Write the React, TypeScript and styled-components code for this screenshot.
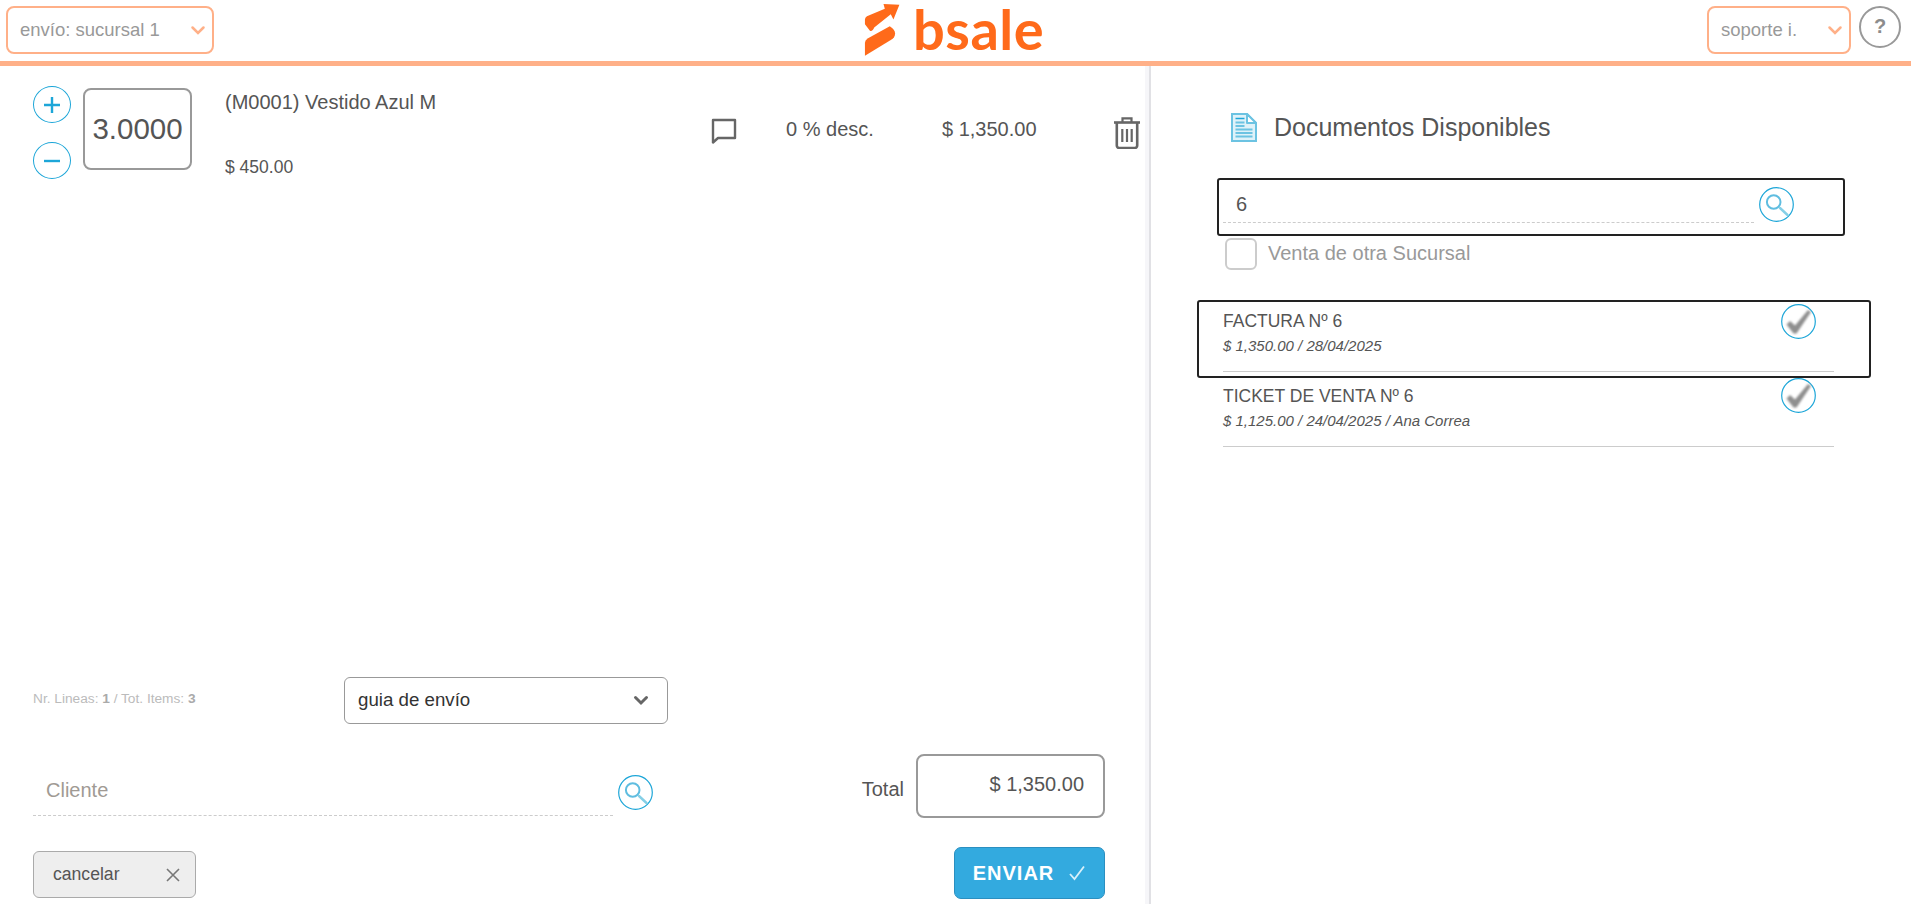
import { createGlobalStyle } from "styled-components";
import styled from "styled-components";

const GlobalStyle = createGlobalStyle`
  html, body {
    margin: 0;
    padding: 0;
    background: #fff;
    overflow: hidden;
  }
  * { box-sizing: border-box; }
  body {
    font-family: "Liberation Sans", Arial, sans-serif;
    color: #555;
  }
`;

const Page = styled.div`
  width: 1911px;
  height: 904px;
  display: flex;
  flex-direction: column;
`;

const Header = styled.header`
  height: 66px;
  flex: none;
  border-bottom: 5px solid #ffb088;
  display: grid;
  grid-template-columns: 1fr auto 1fr;
  padding: 6px 10px 0 6px;
  align-items: start;
`;

const HeaderRight = styled.div`
  display: flex;
  justify-content: flex-end;
  gap: 8px;
`;

const OrangeSelect = styled.div<{ $width: number }>`
  width: ${({ $width }) => $width}px;
  height: 48px;
  border: 2px solid #ffb088;
  border-radius: 8px;
  display: flex;
  align-items: center;
  justify-content: space-between;
  padding: 0 6px 0 12px;
  font-size: 18.5px;
  color: #999;
`;

const HelpButton = styled.div`
  width: 42px;
  height: 42px;
  border: 2px solid #999;
  border-radius: 50%;
  display: flex;
  align-items: center;
  justify-content: center;
  font-size: 20px;
  font-weight: 700;
  color: #8c8c8c;
  padding-bottom: 2px;
`;

const Logo = styled.div`
  display: flex;
  align-items: flex-start;
  gap: 12px;
  margin: -3px 0 0 0;
  padding-left: 2px;
`;

const LogoWord = styled.text`
  font-family: Lato, sans-serif;
  font-weight: 700;
  font-size: 56px;
  letter-spacing: 0.5px;
  fill: #ff6a1a;
`;

const LogoWordArt = styled.svg`
  margin-top: 5px;
`;

const Body = styled.main`
  flex: 1;
  display: flex;
  min-height: 0;
`;

const LeftPanel = styled.section`
  width: 1149px;
  flex: none;
  border-right: 4px solid #f6f6f9;
  display: flex;
  flex-direction: column;
  padding: 20px 0 5px 33px;
`;

const LineRow = styled.div`
  display: flex;
  align-items: flex-start;
`;

const Stepper = styled.div`
  flex: none;
  display: flex;
  flex-direction: column;
  gap: 19px;
  width: 38px;
  margin-right: 12px;
`;

const RoundButton = styled.div`
  width: 38px;
  height: 37px;
  border: 1.5px solid #1da6d8;
  border-radius: 50%;
  display: flex;
  align-items: center;
  justify-content: center;
  color: #1da6d8;
`;

const QtyBox = styled.div`
  flex: none;
  width: 109px;
  height: 82px;
  margin-top: 2px;
  border: 2px solid #999;
  border-radius: 8px;
  display: flex;
  align-items: center;
  justify-content: center;
  font-size: 29.5px;
  color: #555;
  margin-right: 33px;
`;

const LineInfo = styled.div`
  flex: none;
  width: 486px;
  display: flex;
  flex-direction: column;
`;

const LineName = styled.div`
  font-size: 20px;
  line-height: 24px;
  color: #555;
  margin-top: 4px;
`;

const LinePrice = styled.div`
  font-size: 17.5px;
  line-height: 20px;
  color: #555;
  margin-top: 43px;
`;

const CommentSlot = styled.div`
  flex: none;
  width: 75px;
  padding-top: 32px;
  display: flex;
`;

const LineText = styled.div<{ $width: number }>`
  flex: none;
  width: ${({ $width }) => $width}px;
  font-size: 20px;
  line-height: 24px;
  padding-top: 31px;
  color: #555;
`;

const TrashSlot = styled.div`
  flex: none;
  padding-top: 31px;
  display: flex;
`;

const Footer = styled.div`
  margin-top: auto;
  width: 1072px;
  display: flex;
  flex-direction: column;
`;

const FooterRow = styled.div`
  display: flex;
  align-items: center;
  justify-content: space-between;
`;

const StatsRow = styled.div`
  display: flex;
  align-items: center;
`;

const Stats = styled.div`
  width: 311px;
  font-size: 13.7px;
  color: #bbb;
  padding-bottom: 4px;

  b {
    color: #aaa;
  }
`;

const DocSelect = styled.div`
  width: 324px;
  height: 47px;
  border: 1px solid #999;
  border-radius: 6px;
  display: flex;
  align-items: center;
  justify-content: space-between;
  padding: 0 18px 1px 13px;
  font-size: 18.7px;
  color: #333;
`;

const TotalsRow = styled(FooterRow)`
  margin-top: 30px;
  height: 64px;
`;

const ClientGroup = styled.div`
  display: flex;
  align-items: flex-start;
  gap: 5px;
`;

const DashedField = styled.div<{ $width: number; $muted?: boolean }>`
  width: ${({ $width }) => $width}px;
  height: 36px;
  border-bottom: 1px dashed #ccc;
  font-size: 20px;
  line-height: 26px;
  padding: 4px 0 0 13px;
  color: ${({ $muted }) => ($muted ? "#a09a94" : "#555")};
`;

const ClientField = styled(DashedField)`
  height: 60px;
  padding-top: 21px;
`;

const SearchSlot = styled.div`
  padding-top: 19px;
  display: flex;
`;

const TotalGroup = styled.div`
  display: flex;
  align-items: center;
  gap: 12px;
`;

const TotalLabel = styled.span`
  font-size: 20px;
  color: #555;
  padding-top: 6px;
`;

const TotalBox = styled.div`
  width: 189px;
  height: 64px;
  border: 2px solid #999;
  border-radius: 8px;
  display: flex;
  align-items: center;
  justify-content: flex-end;
  padding: 0 19px 4px 0;
  font-size: 20px;
  color: #555;
`;

const ActionsRow = styled(FooterRow)`
  margin-top: 29px;
  align-items: flex-end;
`;

const CancelButton = styled.div`
  width: 163px;
  height: 47px;
  margin-bottom: 1px;
  background: #eee;
  border: 1px solid #aaa;
  border-radius: 6px;
  display: flex;
  align-items: center;
  justify-content: space-between;
  padding: 0 15px 0 19px;
  font-size: 17.6px;
  color: #555;
`;

const SendButton = styled.div`
  width: 151px;
  height: 52px;
  background: #33aadf;
  border: 1px solid #2b8fc0;
  border-radius: 7px;
  display: flex;
  align-items: center;
  justify-content: center;
  gap: 14px;
  color: #fff;
  font-size: 20px;
  font-weight: 700;
  letter-spacing: 1px;
`;

const RightPanel = styled.section`
  flex: 1;
  border-left: 2px solid #e1e1e5;
  display: flex;
  flex-direction: column;
  padding: 45px 0 0 66px;
`;

const TitleRow = styled.div`
  display: flex;
  align-items: center;
  gap: 17px;
  margin-left: 14px;
  height: 32px;
`;

const Title = styled.h2`
  margin: 0;
  font-size: 25px;
  font-weight: 400;
  color: #555;
`;

const SearchBox = styled.div`
  width: 628px;
  height: 58px;
  margin-top: 35px;
  border: 2px solid #222;
  border-radius: 3px;
  display: flex;
  align-items: flex-start;
  padding: 7px 0 0 4px;
  gap: 5px;
`;

const OtherBranch = styled.div`
  display: flex;
  align-items: center;
  gap: 11px;
  margin: 2px 0 0 8px;
  font-size: 20px;
  line-height: 30px;
  color: #999;
`;

const BranchLabel = styled.span`
  padding-bottom: 2px;
`;

const CheckBox = styled.span`
  width: 32px;
  height: 32px;
  border: 2px solid #ccc;
  border-radius: 6px;
`;

const DocList = styled.div`
  width: 611px;
  margin: 27px 0 0 6px;
`;

const DocRow = styled.div<{ $focused?: boolean }>`
  position: relative;
  height: 75px;
  border-bottom: 1px solid #ccc;
  padding-top: 14px;
  display: flex;
  justify-content: space-between;

  ${({ $focused }) =>
    $focused &&
    `&::after {
      content: "";
      position: absolute;
      left: -26px;
      right: -37px;
      top: 3px;
      bottom: -7px;
      border: 2px solid #222;
      border-radius: 3px;
    }`}
`;

const DocTitle = styled.div`
  font-size: 17.5px;
  line-height: 20px;
  color: #555;
`;

const DocMeta = styled.div<{ $gap: number }>`
  font-size: 15px;
  line-height: 16px;
  font-style: italic;
  color: #555;
  margin-top: ${({ $gap }) => $gap}px;
`;

const CheckSlot = styled.div<{ $top: number }>`
  margin: ${({ $top }) => $top}px 18px 0 0;
`;

const Chevron = ({ color, width = 2.5 }: { color: string; width?: number }) => (
  <svg width="16" height="16" viewBox="0 0 16 16" fill="none">
    <path d="M2.5 5.5 8 11l5.5-5.5" stroke={color} strokeWidth={width} strokeLinecap="round" />
  </svg>
);

const SearchIcon = () => (
  <svg width="35" height="35" viewBox="0 0 35 35" fill="none">
    <circle cx="17.5" cy="17.5" r="16.8" stroke="#1da6d8" strokeWidth="1.2" />
    <circle cx="14.7" cy="15" r="6.8" stroke="#5fbde0" strokeWidth="2" />
    <path d="m21 21 7.5 7" stroke="#85cfe6" strokeWidth="2.4" strokeLinecap="round" />
  </svg>
);

const CheckIcon = () => (
  <svg width="35" height="35" viewBox="0 0 35 35" fill="none">
    <defs>
      <filter id="soft" x="-20%" y="-20%" width="140%" height="140%">
        <feGaussianBlur stdDeviation="0.8" />
      </filter>
    </defs>
    <circle cx="17.5" cy="17.5" r="16.8" stroke="#1da6d8" strokeWidth="1.2" />
    <path d="M5.5 20.5 9 17l5 4.5L27 6l3 2-14.5 21.5h-3z" fill="#8f8f8f" filter="url(#soft)" />
  </svg>
);

const BsaleMark = () => (
  <svg width="37" height="53" viewBox="135 8 110 160">
    <path
      d="M137 58Q137 52 143 48L197 25 193 11 241 13 223 58 215 42 165 82Q160 95 152 92L137 72Z"
      fill="#ff6a1a"
    />
    <path
      d="M137 167V128Q137 120 145 115L212 78Q228 88 228 100 228 112 215 120Z"
      fill="#ff6a1a"
    />
  </svg>
);

const CommentIcon = () => (
  <svg width="26" height="26" viewBox="0 0 26 26" fill="none">
    <path d="M2 2h22v18H7l-5 4.5z" stroke="#666" strokeWidth="2.4" strokeLinejoin="round" />
  </svg>
);

const TrashIcon = () => (
  <svg width="26" height="32" viewBox="0 0 26 32" fill="none" stroke="#666">
    <path d="M0 5.5h26" strokeWidth="2.6" />
    <path d="M8.5 5V1.3h9V5" strokeWidth="2.2" />
    <path d="M2.8 6v22.5a2.5 2.5 0 0 0 2.5 2.5h15.4a2.5 2.5 0 0 0 2.5-2.5V6" strokeWidth="2.6" />
    <path d="M8.3 12v13M13 12v13M17.7 12v13" strokeWidth="2.2" />
  </svg>
);

const DocIcon = () => (
  <svg width="26" height="29" viewBox="0 0 26 29" fill="none">
    <path d="M1 1h15l9 9v18H1z" fill="#dff2f9" stroke="#6cc3e2" strokeWidth="2" />
    <path d="M16 1v9h9z" fill="#fff" stroke="#6cc3e2" strokeWidth="2" strokeLinejoin="round" />
    <path d="M4.5 5.5h9" stroke="#1da6d8" strokeWidth="1.5" />
    <path d="M4.5 9.5h9M4.5 13h9M4.5 16.5h17M4.5 20h17M4.5 23.5h17" stroke="#6cc3e2" strokeWidth="1.8" />
  </svg>
);

const documents = [
  { id: 1, title: "FACTURA Nº 6", meta: "$ 1,350.00 / 28/04/2025", focused: true, gap: 7, top: -7 },
  { id: 2, title: "TICKET DE VENTA Nº 6", meta: "$ 1,125.00 / 24/04/2025 / Ana Correa", focused: false, gap: 7, top: -8 },
];

function App() {
  return (
    <Page>
      <GlobalStyle />
      <Header>
        <OrangeSelect $width={208}>
          envío: sucursal 1
          <Chevron color="#ffb088" />
        </OrangeSelect>
        <Logo>
          <BsaleMark />
          <LogoWordArt width="132" height="46" viewBox="0 0 132 46">
            <LogoWord x="0" y="42">
              bsale
            </LogoWord>
          </LogoWordArt>
        </Logo>
        <HeaderRight>
          <OrangeSelect $width={144}>
            soporte i.
            <Chevron color="#ffb088" />
          </OrangeSelect>
          <HelpButton>?</HelpButton>
        </HeaderRight>
      </Header>
      <Body>
        <LeftPanel>
          <LineRow>
            <Stepper>
              <RoundButton>
                <svg width="18" height="18" viewBox="0 0 18 18">
                  <path d="M9 1v16M1 9h16" stroke="currentColor" strokeWidth="2.4" />
                </svg>
              </RoundButton>
              <RoundButton>
                <svg width="18" height="18" viewBox="0 0 18 18">
                  <path d="M1 9h16" stroke="currentColor" strokeWidth="2.4" />
                </svg>
              </RoundButton>
            </Stepper>
            <QtyBox>3.0000</QtyBox>
            <LineInfo>
              <LineName>(M0001) Vestido Azul M</LineName>
              <LinePrice>$ 450.00</LinePrice>
            </LineInfo>
            <CommentSlot>
              <CommentIcon />
            </CommentSlot>
            <LineText $width={156}>0 % desc.</LineText>
            <LineText $width={172}>$ 1,350.00</LineText>
            <TrashSlot>
              <TrashIcon />
            </TrashSlot>
          </LineRow>
          <Footer>
            <StatsRow>
              <Stats>
                Nr. Lineas: <b>1</b> / Tot. Items: <b>3</b>
              </Stats>
              <DocSelect>
                guia de envío
                <Chevron color="#666" width={3} />
              </DocSelect>
            </StatsRow>
            <TotalsRow>
              <ClientGroup>
                <ClientField $width={580} $muted>
                  Cliente
                </ClientField>
                <SearchSlot>
                  <SearchIcon />
                </SearchSlot>
              </ClientGroup>
              <TotalGroup>
                <TotalLabel>Total</TotalLabel>
                <TotalBox>$ 1,350.00</TotalBox>
              </TotalGroup>
            </TotalsRow>
            <ActionsRow>
              <CancelButton>
                cancelar
                <svg width="14" height="14" viewBox="0 0 14 14">
                  <path d="m1 1 12 12M13 1 1 13" stroke="#777" strokeWidth="1.6" />
                </svg>
              </CancelButton>
              <SendButton>
                ENVIAR
                <svg width="18" height="16" viewBox="0 0 18 16" fill="none">
                  <path d="m2 9 4.5 5L16 1.5" stroke="#d8f0fa" strokeWidth="1.8" />
                </svg>
              </SendButton>
            </ActionsRow>
          </Footer>
        </LeftPanel>
        <RightPanel>
          <TitleRow>
            <DocIcon />
            <Title>Documentos Disponibles</Title>
          </TitleRow>
          <SearchBox>
            <DashedField $width={531}>6</DashedField>
            <SearchIcon />
          </SearchBox>
          <OtherBranch>
            <CheckBox />
            <BranchLabel>Venta de otra Sucursal</BranchLabel>
          </OtherBranch>
          <DocList>
            {documents.map((doc) => (
              <DocRow key={doc.id} $focused={doc.focused}>
                <div>
                  <DocTitle>{doc.title}</DocTitle>
                  <DocMeta $gap={doc.gap}>{doc.meta}</DocMeta>
                </div>
                <CheckSlot $top={doc.top}>
                  <CheckIcon />
                </CheckSlot>
              </DocRow>
            ))}
          </DocList>
        </RightPanel>
      </Body>
    </Page>
  );
}

export default App;
